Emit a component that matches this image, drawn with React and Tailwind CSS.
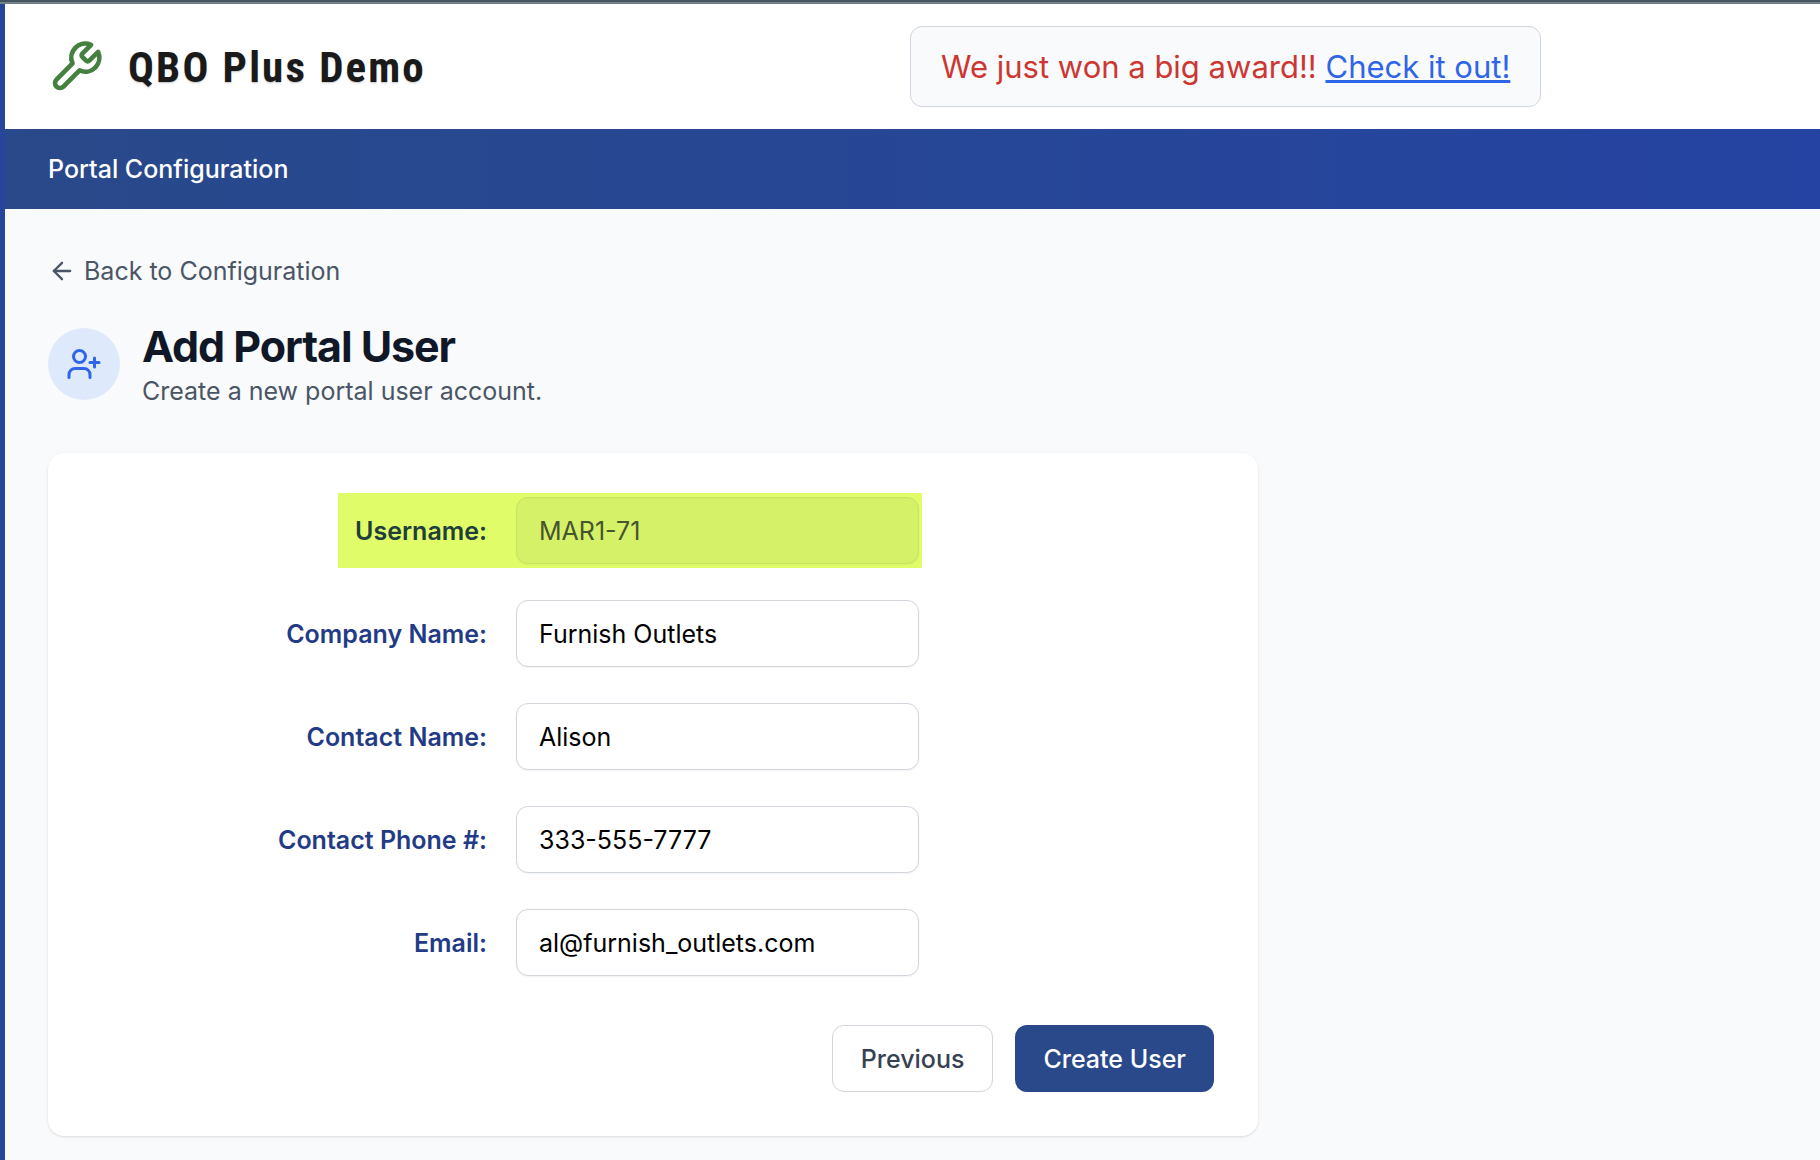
import React, { useState } from 'react';
import { ArrowLeft, UserPlus } from 'lucide-react';

const initialUser = {
  username: 'MAR1-71',
  companyName: 'Furnish Outlets',
  contactName: 'Alison',
  contactPhone: '333-555-7777',
  email: 'al@furnish_outlets.com',
};

const fields = [
  { name: 'username', label: 'Username:', type: 'text', locked: true },
  { name: 'companyName', label: 'Company Name:', type: 'text' },
  { name: 'contactName', label: 'Contact Name:', type: 'text' },
  { name: 'contactPhone', label: 'Contact Phone #:', type: 'tel' },
  { name: 'email', label: 'Email:', type: 'email' },
];

const WrenchLogo = () => (
  <svg
    viewBox="0 0 24 24"
    fill="none"
    stroke="currentColor"
    strokeWidth="2"
    strokeLinecap="round"
    strokeLinejoin="round"
    aria-hidden="true"
    className="size-14 shrink-0 text-[#458040]"
  >
    <path d="M14.7 6.3a1 1 0 0 0 0 1.4l1.6 1.6a1 1 0 0 0 1.4 0l3.77-3.77a6 6 0 0 1-7.94 7.94l-6.91 6.91a2.12 2.12 0 0 1-3-3l6.91-6.91a6 6 0 0 1 7.94-7.94l-3.76 3.76z" />
  </svg>
);

const Header = () => (
  <header className="grid grid-cols-2 items-center bg-white py-[22px] pr-12 pl-[43px]">
    <div className="flex items-center gap-6">
      <WrenchLogo />
      <span className="font-['Roboto_Condensed','Roboto',sans-serif] text-[43px] leading-[56px] font-bold tracking-wider whitespace-nowrap text-[#1a1a1a] text-shadow-sm">
        QBO Plus Demo
      </span>
    </div>
    <div className="justify-self-start rounded-xl border border-gray-300 bg-[#f9fafc] px-[30px] py-5 text-[31px] leading-[39px] whitespace-nowrap text-[#cc3732]">
      We just won a big award!!{' '}
      <a href="#award" className="text-[#2f65e8] underline">
        Check it out!
      </a>
    </div>
  </header>
);

const Field = ({ field, value, onChange }) => (
  <div className="relative isolate grid grid-cols-[minmax(0,395px)_minmax(0,403px)] items-center gap-[29px]">
    <label
      htmlFor={field.name}
      className={`text-right font-semibold ${field.locked ? 'text-[#213e3b]' : 'text-[#233b87]'}`}
    >
      {field.label}
    </label>
    <div className="relative">
      {field.locked && (
        <div className="absolute -top-1 -bottom-1 -right-[3px] -left-[178px] -z-10 bg-[#e0fd69]" />
      )}
      <input
        id={field.name}
        name={field.name}
        type={field.type}
        value={value}
        onChange={onChange}
        readOnly={field.locked}
        className={`h-[67px] w-full rounded-xl border px-[22px] shadow-xs ${
          field.locked
            ? 'border-[#c8e262] bg-[#d5f168] text-[#46552f]'
            : 'border-gray-300 bg-white text-black'
        }`}
      />
    </div>
  </div>
);

const App = () => {
  const [user, setUser] = useState(initialUser);

  const handleChange = (e) => {
    setUser({ ...user, [e.target.name]: e.target.value });
  };

  const handleSubmit = (e) => {
    e.preventDefault();
  };

  return (
    <div className="flex min-h-screen flex-col bg-[#f9fafc] font-['Inter',sans-serif] text-[25px] leading-9">
      <div className="h-1 border-b-2 border-[#738189] bg-[#455560]" />
      <div className="flex-1 border-l-[5px] border-[#27459a]">
        <Header />

        <nav className="bg-linear-to-r from-[#29498a] to-[#2543a2] px-[43px] py-[22px]">
          <a href="#configuration" className="block font-medium text-white">
            Portal Configuration
          </a>
        </nav>

        <main className="px-[43px] pt-11">
          <a href="#back" className="inline-flex items-center gap-2 text-gray-600">
            <ArrowLeft size={28} strokeWidth={2} />
            Back to Configuration
          </a>

          <div className="mt-[25px] flex items-center gap-[22px]">
            <div className="flex size-[72px] shrink-0 items-center justify-center rounded-full bg-[#dee9fc]">
              <UserPlus size={36} className="text-[#2f65e8]" />
            </div>
            <div>
              <h1 className="text-[43px] leading-[54px] font-bold tracking-tight text-gray-900">
                Add Portal User
              </h1>
              <p className="text-gray-600">Create a new portal user account.</p>
            </div>
          </div>

          <form
            onSubmit={handleSubmit}
            className="mt-11 max-w-[1210px] rounded-2xl bg-white p-11 shadow-sm"
          >
            <div className="flex flex-col gap-9">
              {fields.map((field) => (
                <Field
                  key={field.name}
                  field={field}
                  value={user[field.name]}
                  onChange={handleChange}
                />
              ))}
            </div>

            <div className="mt-[49px] flex justify-end gap-[22px]">
              <button
                type="button"
                className="h-[67px] rounded-xl border border-gray-300 bg-white px-7 font-medium text-gray-700"
              >
                Previous
              </button>
              <button
                type="submit"
                className="h-[67px] rounded-xl bg-[#29498a] px-7 font-medium text-white"
              >
                Create User
              </button>
            </div>
          </form>
        </main>
      </div>
    </div>
  );
};

export default App;
